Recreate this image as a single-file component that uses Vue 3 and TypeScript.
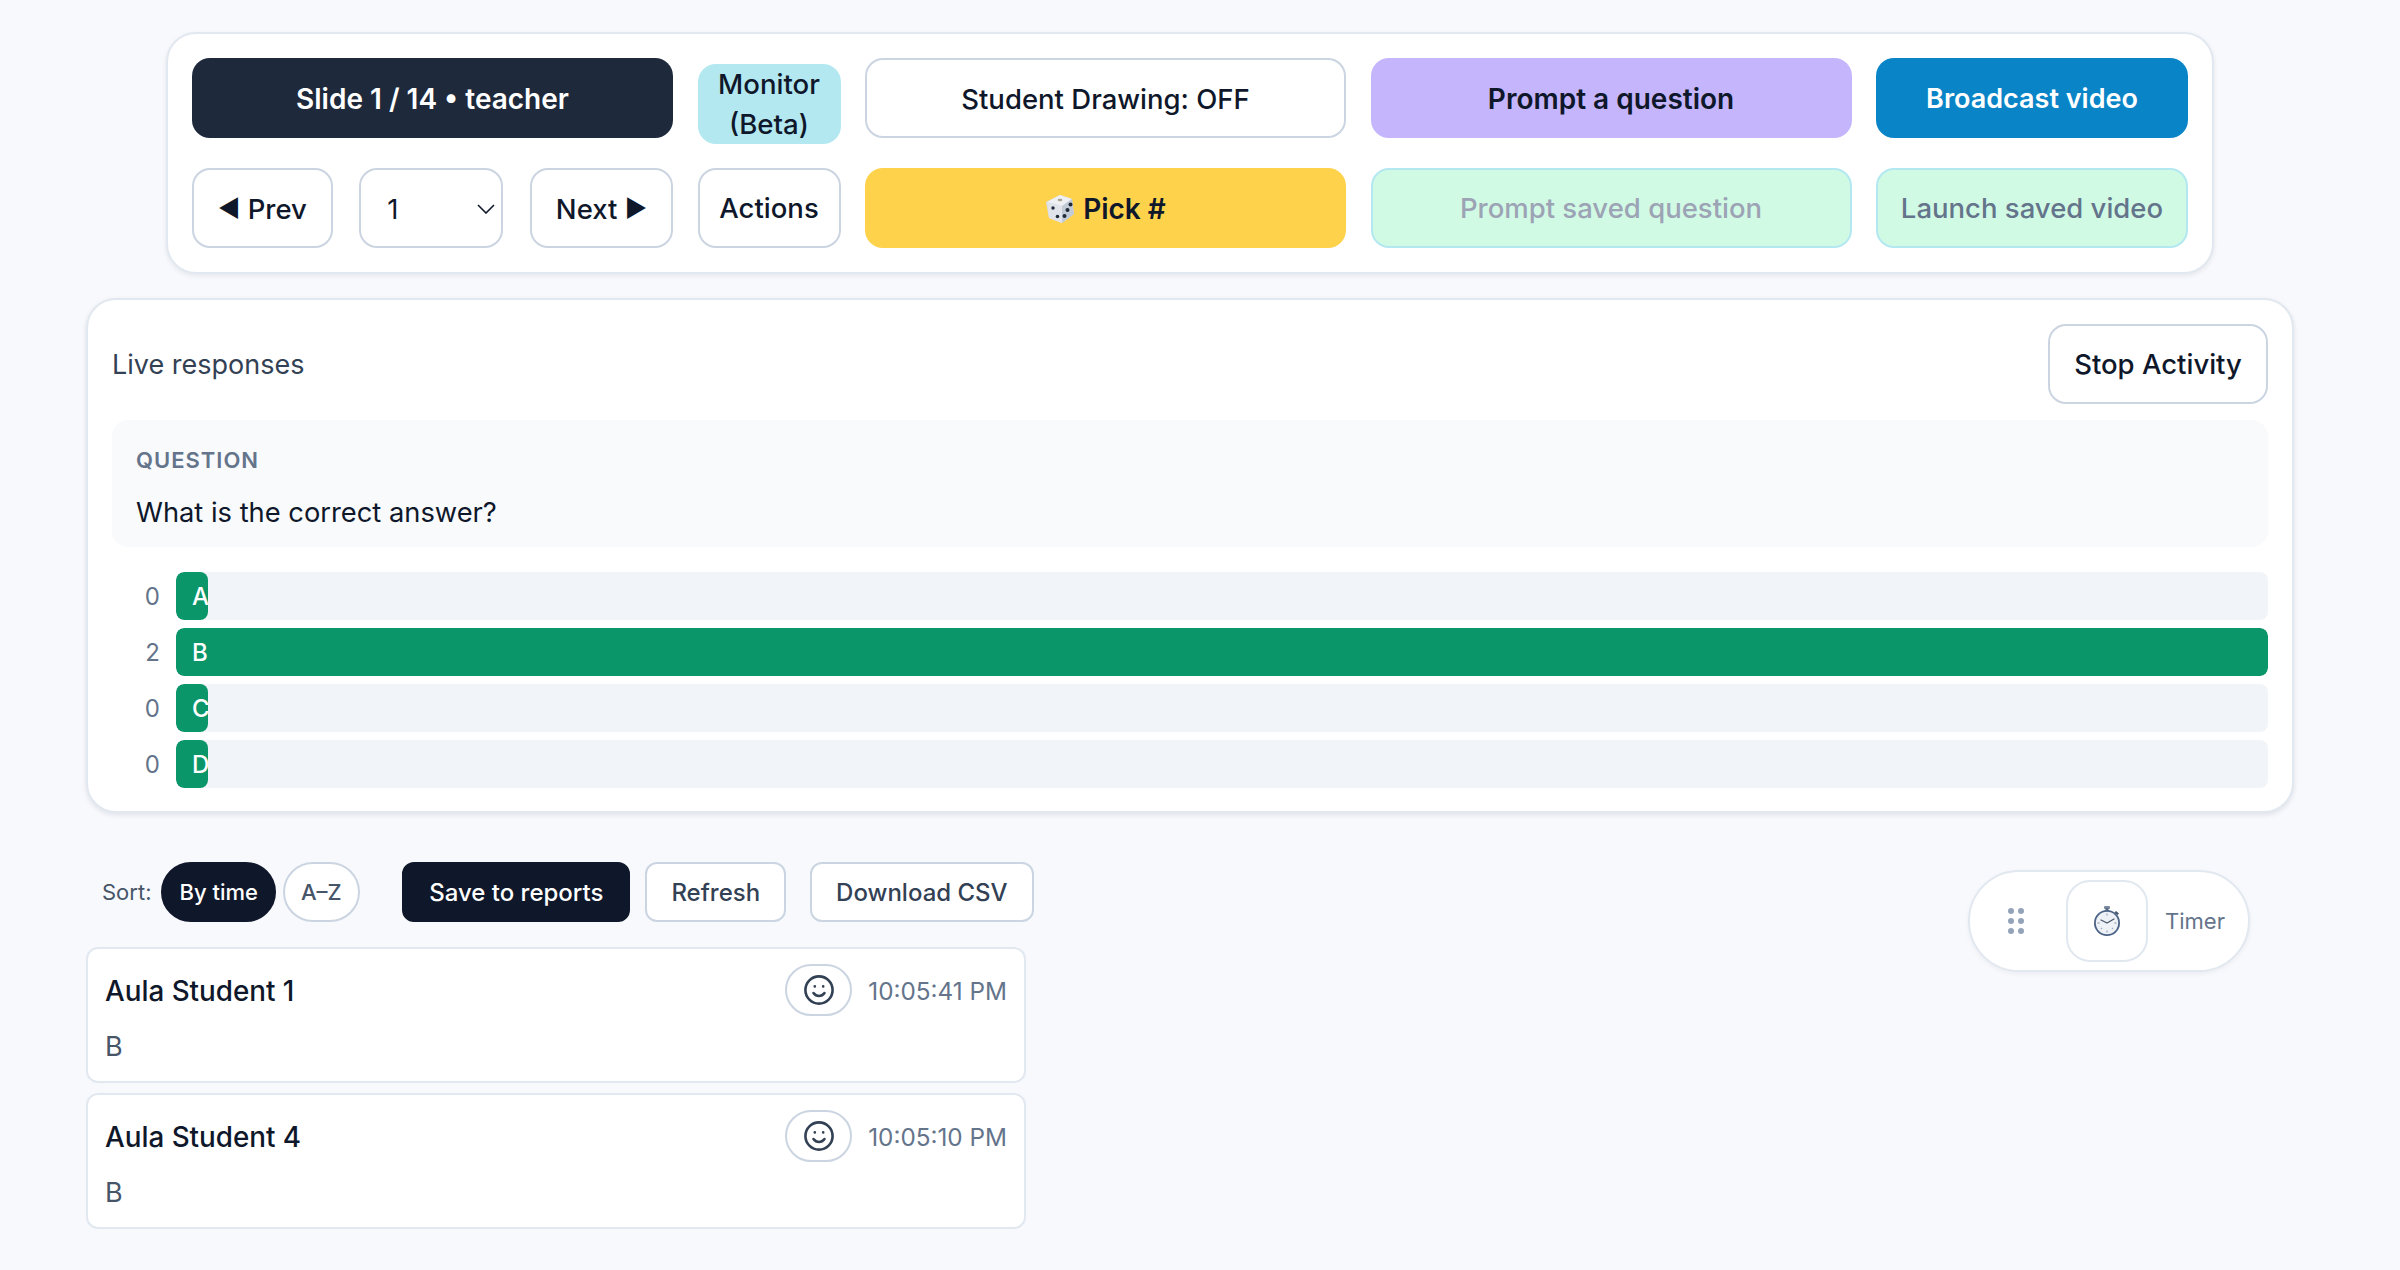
<template>
  <div class="page">
    <section class="controls">
      <div class="slide-pill">Slide 1 / 14 • teacher</div>
      <button class="btn monitor">Monitor (Beta)</button>
      <button class="btn plain">Student Drawing: OFF</button>
      <button class="btn violet">Prompt a question</button>
      <button class="btn sky">Broadcast video</button>

      <div class="nav">
        <button class="btn plain"><span class="arrow">◀</span>&nbsp;Prev</button>
        <div class="select-wrap">
          <select v-model="slide">
            <option v-for="n in 14" :key="n" :value="n">{{ n }}</option>
          </select>
          <svg class="chevron" width="18" height="10" viewBox="0 0 18 10" fill="none">
            <path d="M1 1l8 8 8-8" stroke="#0f172a" stroke-width="1.6" />
          </svg>
        </div>
        <button class="btn plain">Next&nbsp;<span class="arrow">▶</span></button>
      </div>
      <button class="btn plain actions">Actions</button>
      <button class="btn amber">
        <svg class="dice" width="30" height="30" viewBox="0 0 30 30">
          <path d="M15 1l12 4 2 15-12 9-13-5L1 8z" fill="#d5dbe3" />
          <path d="M15 1l12 4-10 7L2 8z" fill="#eef0f3" />
          <path d="M17 12l10-7 2 15-12 9z" fill="#c2cad6" />
          <path d="M2 8l15 4v17L4 24z" fill="#e0e4ea" />
          <ellipse cx="15" cy="6" rx="2.4" ry="1.3" fill="#a9a28f" />
          <circle cx="8" cy="14" r="1.7" fill="#1f2937" />
          <circle cx="12.500" cy="22.500" r="1.800" fill="#1f2937" />
          <circle cx="25.500" cy="10.500" r="2" fill="#1f2937" />
          <circle cx="22.500" cy="16" r="2" fill="#1f2937" />
          <circle cx="19.500" cy="22" r="2" fill="#1f2937" />
        </svg>
        Pick #
      </button>
      <button class="btn saved faded">Prompt saved question</button>
      <button class="btn saved">Launch saved video</button>
    </section>

    <section class="live-card">
      <header class="live-head">
        <span class="live-title">Live responses</span>
        <button class="btn plain stop">Stop Activity</button>
      </header>
      <div class="question">
        <div class="question-label">QUESTION</div>
        <div class="question-text">What is the correct answer?</div>
      </div>
      <div class="bars">
        <div v-for="bar in bars" :key="bar.label" class="bar-row">
          <span class="bar-count">{{ bar.count }}</span>
          <div class="bar-track">
            <div class="bar-fill" :style="{ width: barWidth(bar.count) }">{{ bar.label }}</div>
          </div>
        </div>
      </div>
    </section>

    <div class="toolbar">
      <span class="sort-label">Sort:</span>
      <button class="chip" :class="{ active: sort === 'time' }" @click="sort = 'time'">By time</button>
      <button class="chip" :class="{ active: sort === 'az' }" @click="sort = 'az'">A–Z</button>
      <button class="tool dark">Save to reports</button>
      <button class="tool">Refresh</button>
      <button class="tool csv">Download CSV</button>
    </div>

    <div class="responses">
      <article v-for="item in sorted" :key="item.name" class="response">
        <div class="response-head">
          <span class="response-name">{{ item.name }}</span>
          <div class="response-meta">
            <button class="react" aria-label="React">
              <svg width="32" height="32" viewBox="0 0 32 32" fill="none" stroke="#334155" stroke-width="2.6" stroke-linecap="round">
                <circle cx="16" cy="16" r="13.6" />
                <path d="M10.5 19c1.4 2 3.3 3 5.500 3s4.100-1 5.500-3" />
                <path d="M11.800 12.200v.2M20.200 12.200v.2" />
              </svg>
            </button>
            <span class="response-time">{{ item.time }}</span>
          </div>
        </div>
        <div class="response-answer">{{ item.answer }}</div>
      </article>
    </div>

    <aside class="timer">
      <div class="grip">
        <i v-for="n in 6" :key="n"></i>
      </div>
      <button class="timer-btn" aria-label="Timer">
        <svg width="30" height="32" viewBox="0 0 30 32">
          <rect x="12" y="1" width="6" height="3" rx="1" fill="#7b8aa0" />
          <rect x="13.500" y="3" width="3" height="4" fill="#5a6b83" />
          <path d="M24 6l3 2.500-1.500 1.500-3-2.500z" fill="#475569" />
          <circle cx="15" cy="18" r="13" fill="#4a6285" />
          <circle cx="15" cy="18" r="11.200" fill="#eef1f5" />
          <path d="M15 18l-6-3M15 18l7-4" stroke="#475569" stroke-width="1.200" stroke-linecap="round" />
          <path d="M15 8.500v2M15 25.500v2M5.500 18h2M22.500 18h2M9 24l1-1M21 24l-1-1" stroke="#a3afc0" stroke-width="1.300" />
        </svg>
      </button>
      <span class="timer-label">Timer</span>
    </aside>
  </div>
</template>

<script setup lang="ts">
import { computed, ref } from 'vue'

const slide = ref(1)
const sort = ref<'time' | 'az'>('time')

const bars = [
  { label: 'A', count: 0 },
  { label: 'B', count: 2 },
  { label: 'C', count: 0 },
  { label: 'D', count: 0 },
]

const responses = [
  { name: 'Aula Student 1', time: '10:05:41 PM', answer: 'B' },
  { name: 'Aula Student 4', time: '10:05:10 PM', answer: 'B' },
]

const sorted = computed(() =>
  sort.value === 'az' ? [...responses].sort((a, b) => a.name.localeCompare(b.name)) : responses,
)

const barWidth = (count: number) => (count === 0 ? '32px' : `${(count / 2) * 100}%`)
</script>

<style>
html,
body {
  margin: 0;
  background: #f8f9fd;
}
</style>

<style scoped>
.page {
  position: relative;
  box-sizing: border-box;
  min-height: 1270px;
  padding: 32px 106px 40px 86px;
  font-family: Inter, 'Liberation Sans', sans-serif;
  color: #0f172a;
}
button,
select {
  font-family: inherit;
  box-sizing: border-box;
  cursor: pointer;
}
.controls {
  box-sizing: border-box;
  margin: 0 80px 24px;
  height: 242px;
  padding: 24px;
  display: grid;
  grid-template-columns: 481px 143px 481px 481px 312px;
  grid-template-rows: 86px 80px;
  column-gap: 24.5px;
  row-gap: 24px;
  background: #fff;
  border: 2px solid #e2e8f0;
  border-radius: 30px;
  box-shadow: 0 2px 5px rgba(15, 23, 42, 0.08);
}
.slide-pill {
  height: 80px;
  padding-top: 1px;
  box-sizing: border-box;
  display: flex;
  align-items: center;
  justify-content: center;
  background: #1e293b;
  color: #fff;
  font-size: 28px;
  font-weight: 600;
  border-radius: 18px;
}
.btn {
  height: 80px;
  padding: 1px 25px 0;
  border: 2px solid transparent;
  border-radius: 18px;
  font-size: 28px;
  font-weight: 600;
  line-height: 40px;
  color: #0f172a;
  display: flex;
  align-items: center;
  justify-content: center;
  white-space: nowrap;
}
.plain {
  background: #fff;
  border-color: #cbd5e1;
  font-size: 27.5px;
  font-weight: 500;
}
.arrow {
  font-size: 24px;
}
.monitor {
  align-self: end;
  padding: 0;
  background: #b3e8f1;
  white-space: normal;
  text-align: center;
  font-size: 27.6px;
  font-weight: 500;
}
.violet {
  background: #c4b5fd;
}
.sky {
  background: #0984c7;
  color: #fff;
  font-size: 27px;
}
.amber {
  gap: 8px;
  background: #fed24b;
}
.saved {
  background: #d1fae5;
  border-color: #b3e8f1;
  color: #64748b;
  padding: 0;
  font-size: 27.5px;
  font-weight: 500;
}
.faded {
  color: #9ca3b4;
}
.nav {
  display: flex;
  justify-content: space-between;
}
.nav .btn {
  padding: 1px 24px 0;
}
.actions {
  padding: 0;
}
.select-wrap {
  position: relative;
  width: 144px;
  height: 80px;
}
.select-wrap select {
  width: 100%;
  height: 100%;
  padding: 1px 0 0 26px;
  appearance: none;
  background: #fff;
  border: 2px solid #cbd5e1;
  border-radius: 18px;
  font-size: 27.5px;
  color: #0f172a;
}
.chevron {
  position: absolute;
  right: 8px;
  top: 36px;
  pointer-events: none;
}
.live-card {
  box-sizing: border-box;
  height: 515px;
  padding: 24px;
  background: #fff;
  border: 2px solid #e2e8f0;
  border-radius: 30px;
  box-shadow: 0 2px 5px rgba(15, 23, 42, 0.1);
}
.live-head {
  display: flex;
  justify-content: space-between;
  align-items: center;
  margin-bottom: 16px;
}
.live-title {
  font-size: 27px;
  color: #334155;
}
.stop {
  width: 220px;
  padding: 0;
}
.question {
  box-sizing: border-box;
  height: 127px;
  padding: 22px 24px 0;
  background: #f8fafc;
  border-radius: 16px;
}
.question-label {
  font-size: 22px;
  line-height: 36px;
  font-weight: 600;
  letter-spacing: 1px;
  color: #64748b;
}
.question-text {
  margin-top: 15px;
  font-size: 27.3px;
  line-height: 40px;
}
.bars {
  margin-top: 25px;
  display: flex;
  flex-direction: column;
  gap: 8px;
}
.bar-row {
  display: grid;
  grid-template-columns: 48px 1fr;
  column-gap: 16px;
  align-items: center;
}
.bar-count {
  text-align: right;
  font-size: 24px;
  color: #64748b;
}
.bar-track {
  height: 48px;
  background: #f1f5f9;
  border-radius: 8px;
  overflow: hidden;
}
.bar-fill {
  box-sizing: border-box;
  height: 100%;
  padding-left: 16px;
  display: flex;
  align-items: center;
  background: #0a9669;
  color: #fff;
  font-size: 24px;
  font-weight: 500;
  border-radius: 8px;
  overflow: hidden;
}
.toolbar {
  margin: 49px 0 25px;
  padding-left: 16px;
  display: flex;
  align-items: center;
  height: 60px;
}
.sort-label {
  margin-right: 10px;
  font-size: 22px;
  color: #475569;
}
.chip {
  height: 60px;
  padding: 0 16px;
  margin-right: 7px;
  background: #fff;
  border: 2px solid #cbd5e1;
  border-radius: 30px;
  font-size: 22px;
  font-weight: 500;
  color: #475569;
}
.chip.active {
  background: #0f172a;
  border-color: #0f172a;
  color: #fff;
}
.tool {
  height: 60px;
  padding: 0 24px;
  margin-right: 15px;
  background: #fff;
  border: 2px solid #cbd5e1;
  border-radius: 12px;
  font-size: 24px;
  font-weight: 500;
  color: #334155;
}
.tool.dark {
  margin-left: 35.5px;
  padding: 0 25px;
  background: #0f172a;
  border-color: #0f172a;
  color: #fff;
}
.tool.csv {
  margin-left: 9px;
  margin-right: 0;
  padding: 0 24px;
}
.responses {
  width: 940px;
  display: flex;
  flex-direction: column;
  gap: 10px;
}
.response {
  box-sizing: border-box;
  height: 136px;
  padding: 15px 17px 0;
  background: #fff;
  border: 2px solid #e2e8f0;
  border-radius: 12px;
}
.response-head {
  display: flex;
  justify-content: space-between;
  align-items: center;
}
.response-name {
  padding-top: 2px;
  font-size: 27.8px;
  font-weight: 500;
}
.response-meta {
  display: flex;
  align-items: center;
  gap: 16px;
}
.react {
  width: 67px;
  height: 52px;
  padding: 0;
  display: flex;
  align-items: center;
  justify-content: center;
  background: #fff;
  border: 2px solid #cbd5e1;
  border-radius: 26px;
}
.response-time {
  padding-top: 1px;
  font-size: 24.3px;
  color: #64748b;
}
.response-answer {
  margin-top: 11px;
  font-size: 27px;
  line-height: 40px;
  color: #475569;
}
.timer {
  position: absolute;
  left: 1968px;
  top: 870px;
  box-sizing: border-box;
  width: 282px;
  height: 102px;
  padding-left: 38px;
  display: flex;
  align-items: center;
  background: #fff;
  border: 2px solid #e2e8f0;
  border-radius: 51px;
  box-shadow: 0 2px 5px rgba(15, 23, 42, 0.05);
}
.grip {
  width: 16px;
  display: grid;
  grid-template-columns: 6px 6px;
  gap: 4px;
}
.grip i {
  width: 6px;
  height: 6px;
  border-radius: 50%;
  background: #94a3b8;
}
.timer-btn {
  margin-left: 42px;
  width: 82px;
  height: 82px;
  padding: 0;
  display: flex;
  align-items: center;
  justify-content: center;
  background: #fff;
  border: 2px solid #e2e8f0;
  border-radius: 24px;
}
.timer-label {
  margin-left: 17px;
  font-size: 22px;
  color: #64748b;
}
</style>
